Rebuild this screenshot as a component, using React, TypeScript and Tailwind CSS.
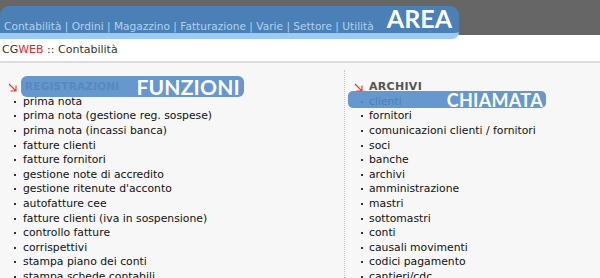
import React from "react";

const left = [
  "prima nota",
  "prima nota (gestione reg. sospese)",
  "prima nota (incassi banca)",
  "fatture clienti",
  "fatture fornitori",
  "gestione note di accredito",
  "gestione ritenute d'acconto",
  "autofatture cee",
  "fatture clienti (iva in sospensione)",
  "controllo fatture",
  "corrispettivi",
  "stampa piano dei conti",
  "stampa schede contabili",
];

const right = [
  "clienti",
  "fornitori",
  "comunicazioni clienti / fornitori",
  "soci",
  "banche",
  "archivi",
  "amministrazione",
  "mastri",
  "sottomastri",
  "conti",
  "causali movimenti",
  "codici pagamento",
  "cantieri/cdc",
];

const menu = ["Contabilità", "Ordini", "Magazzino", "Fatturazione", "Varie", "Settore", "Utilità"];

function Arrow() {
  return (
    <svg width="9" height="9" viewBox="0 0 9 9" className="block">
      <path d="M1 1 L7.5 7.5 M8 2.5 L8 8 L2.5 8" stroke="#e8332b" strokeWidth="1.1" fill="none" />
    </svg>
  );
}

function Item({ text, bulletGap }: { text: string; bulletGap: string }) {
  return (
    <div className="flex items-center h-[14.6px] whitespace-nowrap">
      <span className={`w-[2px] h-[2px] bg-[#333] ${bulletGap}`} />
      <span>{text}</span>
    </div>
  );
}

const labelFont = { fontFamily: 'Lato, "DejaVu Sans", sans-serif' };

export default function App() {
  return (
    <div className="w-[600px] h-[278px] overflow-hidden bg-white text-[#111]" style={{ fontFamily: '"DejaVu Sans", Verdana, sans-serif' }}>
      <div className="h-[35px] bg-[#666666] pt-[6px]">
        <div className="relative z-10 w-[459px] h-[33px] bg-[#4a80b5] border-b-[6px] border-[#9ccaf2] rounded-t-[9px] rounded-br-[7px] flex items-end justify-between pl-[4px] pr-[7px]">
          <div className="text-[10.6px] leading-none text-[#b2d1f0] pb-[1px] whitespace-nowrap">
            {menu.join(" | ")}
          </div>
          <div className="text-[25px] leading-none font-bold text-white pb-[2px]" style={labelFont}>AREA</div>
        </div>
      </div>
      <div className="h-[26px] pl-[2px] pt-[8px] text-[11px] leading-[14px] text-[#333]">
        CG<span className="text-[#e8262b]">WEB</span> :: Contabilità
      </div>
      <div className="h-[2px] bg-[#dcdcdc]" />
      <div className="bg-[#f7f7f7] h-[215px] flex text-[10.8px]">
        <div className="relative w-[344px] pt-[17px] pl-[8px]">
          <div className="flex items-center h-[14.6px]">
            <Arrow />
            <span className="ml-[8px] font-bold text-[#666] text-[10.5px] tracking-[0.2px]">REGISTRAZIONI</span>
          </div>
          <div className="pl-[6px]">
            {left.map((t) => (
              <Item key={t} text={t} bulletGap="mr-[7px]" />
            ))}
          </div>
          <div className="absolute left-[21px] top-[13px] w-[223px] h-[21px] rounded-[6px] bg-[rgba(85,140,200,0.9)] flex items-center justify-end pr-[4px]">
            <span className="text-[21px] leading-none font-bold text-white tracking-[0.2px]" style={labelFont}>FUNZIONI</span>
          </div>
        </div>
        <div className="relative mt-[7px] border-l border-dotted border-[#c8c8c8] pt-[10px] pl-[9px] flex-1">
          <div className="flex items-center h-[14.6px]">
            <Arrow />
            <span className="ml-[6px] font-bold text-[#555] text-[11px] tracking-[0.3px]">ARCHIVI</span>
          </div>
          <div className="pl-[7px]">
            {right.map((t) => (
              <Item key={t} text={t} bulletGap="mr-[6px]" />
            ))}
          </div>
          <div className="absolute left-[3px] top-[21px] w-[198px] h-[17px] rounded-[5px] bg-[rgba(85,140,200,0.9)] flex items-center justify-end pr-[3px]">
            <span className="text-[18px] leading-none font-bold text-white tracking-[0.3px]" style={labelFont}>CHIAMATA</span>
          </div>
        </div>
      </div>
    </div>
  );
}
